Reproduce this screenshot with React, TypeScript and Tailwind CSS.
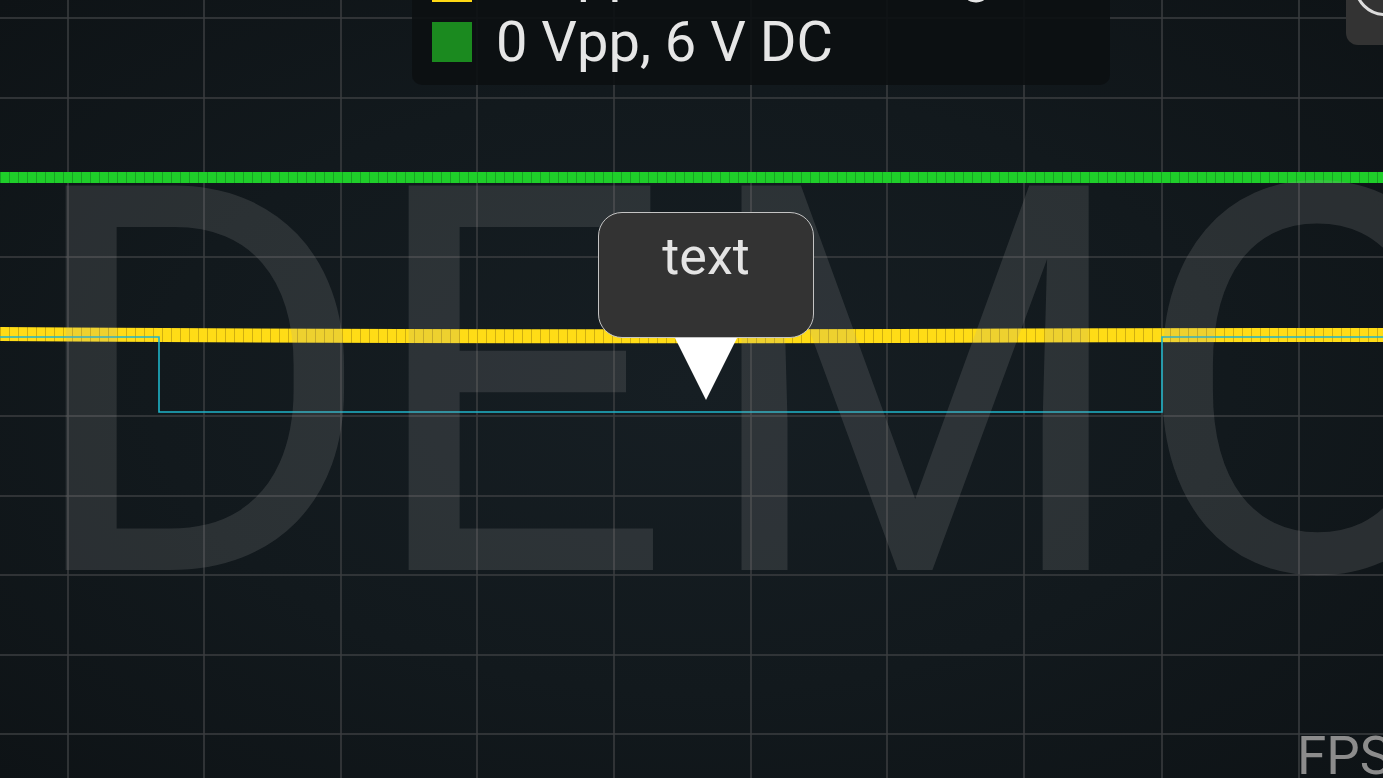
import React from "react";

const COLS = [68, 204, 341, 477, 614, 751, 887, 1024, 1162, 1299];
const ROWS = [18, 98, 177, 257, 336, 416, 496, 575, 655, 734];

const legend = [
  { color: "bg-[#ffd814]", label: "2 Vpp, 3.3 V DC, avg", lift: "mb-5" },
  { color: "bg-[#1b8a1f]", label: "0 Vpp, 6 V DC", lift: "" },
];

const wm = {
  fontFamily: "Roboto, 'Liberation Sans', sans-serif",
  fontSize: 541,
  fill: "rgba(160,160,160,0.18)",
};

function Scope() {
  return (
    <svg width={1383} height={778} className="absolute inset-0 block">
      <defs>
        <pattern id="greenTicks" width="9" height="20" patternUnits="userSpaceOnUse">
          <rect width="9" height="20" fill="#1fce2a" />
          <rect width="1" height="20" fill="#17a322" />
        </pattern>
        <pattern id="yellowTicks" width="9" height="20" patternUnits="userSpaceOnUse">
          <rect width="9" height="20" fill="#ffdc16" />
          <rect width="1" height="20" fill="#cfae10" />
        </pattern>
      </defs>

      {/* grid */}
      {COLS.map((x) => (
        <line key={"c" + x} x1={x} y1={0} x2={x} y2={778} stroke="#3b3e41" strokeWidth={1.5} />
      ))}
      {ROWS.map((y) => (
        <line key={"r" + y} x1={0} y1={y} x2={1383} y2={y} stroke="#3b3e41" strokeWidth={1.5} />
      ))}

      {/* traces */}
      <rect x={0} y={172} width={1383} height={11} fill="url(#greenTicks)" />
      <path
        d="M0 334 C 120 335, 220 336, 400 336 S 700 337, 900 336 S 1150 335, 1383 335"
        fill="none"
        stroke="url(#yellowTicks)"
        strokeWidth={14}
      />
      <polyline
        points="0,337 159,337 159,412 1162,412 1162,337 1383,337"
        fill="none"
        stroke="#1fb4c9"
        strokeWidth={1.6}
      />

      {/* watermark */}
      <text x={21} y={570} {...wm}>D</text>
      <text x={364} y={570} {...wm}>E</text>
      <text x={0} y={570} transform="translate(701 0) scale(0.907 1)" {...wm}>M</text>
      <text x={1131} y={570} {...wm}>O</text>
    </svg>
  );
}

export default function App() {
  return (
    <div className="relative w-[1383px] h-[778px] overflow-hidden bg-[radial-gradient(ellipse_at_center,#161e23_0%,#12191d_55%,#0e1316_100%)] font-[Roboto,'Liberation_Sans',sans-serif]">
      <Scope />

      {/* legend */}
      <div className="absolute left-[412px] top-[-60px] w-[698px] rounded-[10px] bg-[#0c1012]/90 pl-5 pt-[11.5px] pb-[13.5px] flex flex-col">
        {legend.map((row) => (
          <div key={row.label} className="h-[60px] flex items-center gap-6">
            <span className={`w-10 h-10 shrink-0 ${row.color}`} />
            <span className={`text-[56px] leading-none text-[#e6e6e6] whitespace-nowrap ${row.lift}`}>{row.label}</span>
          </div>
        ))}
      </div>

      {/* corner button */}
      <div className="absolute right-[-20px] top-[-20px] w-[57px] h-[65px] rounded-[12px] bg-[#333333] overflow-hidden">
        <svg width={57} height={65} className="block">
          <circle cx={39} cy={5} r={29.5} fill="none" stroke="#dcdcdc" strokeWidth={3} />
        </svg>
      </div>

      {/* tooltip */}
      <div className="absolute left-[598px] top-[212px] flex flex-col items-center">
        <div className="w-[216px] h-[126px] rounded-[24px] border border-[#c4c4c4] bg-[#333333] pt-[18px] text-center">
          <span className="text-[52px] leading-none text-[#e4e4e4]">text</span>
        </div>
        <svg width={62} height={62} className="block">
          <polygon points="0,0 62,0 31,62" fill="#ffffff" />
        </svg>
      </div>

      {/* fps */}
      <div className="absolute left-[1297px] top-[730px] text-[53px] leading-none text-[#8c8c8c] whitespace-nowrap">
        FPS
      </div>
    </div>
  );
}
